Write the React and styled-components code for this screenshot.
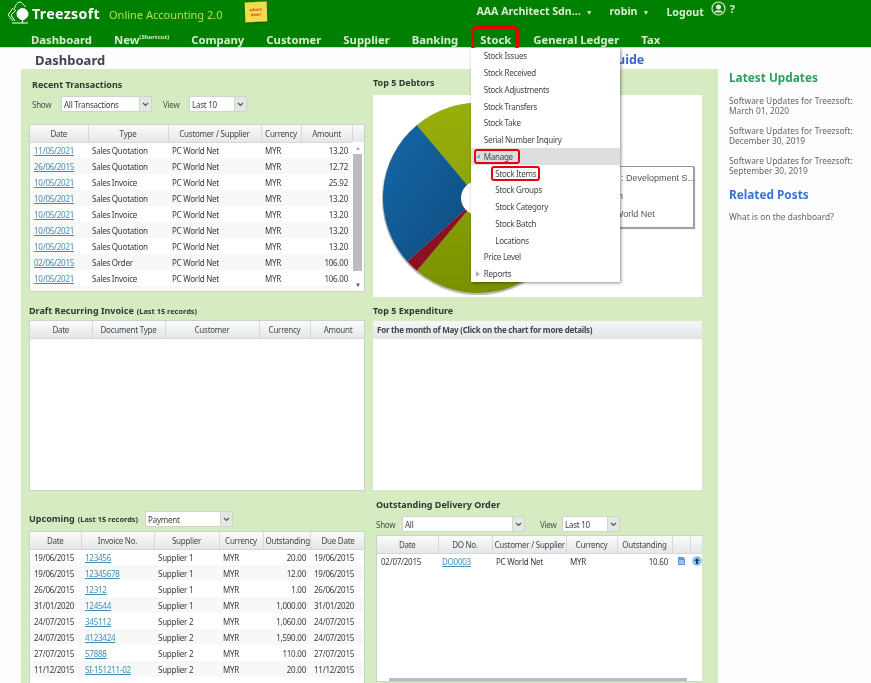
import React from "react";
import styled, { createGlobalStyle } from "styled-components";

const Global = createGlobalStyle`
  html, body { margin: 0; padding: 0; background: #fdfdfd; }
  body { font-family: "Noto Sans", "Liberation Sans", sans-serif; font-size: 8px; color: #333; }
  * { box-sizing: border-box; }
`;

const Page = styled.div`
  width: 871px; height: 683px; overflow: hidden; position: relative; background: #fdfdfd; filter: blur(.3px);
`;
const Header = styled.header`background: #008000; height: 48px; border-bottom: 1px solid #c9dcc9;`;
const TopBar = styled.div`display: flex; align-items: center; height: 26px; padding-left: 7px; position: relative;`;
const Brand = styled.span`
  font: bold 14.2px "Noto Sans", sans-serif; color: #fff; margin-left: 1px; letter-spacing: .35px; width: 77px; flex: none;
`;
const Product = styled.span`font: 11px "Noto Sans", sans-serif; color: #b5e04a; width: 136px; white-space: nowrap; flex: none; margin-top: 2px;`;
const Note = styled.div`
  width: 22px; height: 20px; background: #f5d94e; color: #c8401c; font: bold 4px/5px "Liberation Sans", sans-serif;
  text-align: center; padding-top: 5px; transform: rotate(-2deg); box-shadow: 0 1px 1px rgba(0,0,0,.3); margin-top: -2px;
`;
const UserMenu = styled.div`
  margin-left: auto; margin-right: 136px; display: flex; align-items: center; margin-top: -4px;
  font: bold 10.6px "Noto Sans", sans-serif; color: #d9ecd0; white-space: nowrap;
`;
const UserItem = styled.span`margin-right: ${p => p.$gap}px; margin-top: ${p => p.$top || 0}px;`;
const Caret = styled.span`font-size: 7px; margin-left: 5px; color: #c6dcc0;`;
const Help = styled.span`font-size: 11px; color: #d9ecd0; margin-left: 4px; margin-top: -6px;`;
const IconUp = styled.span`display: flex; margin-top: -6px;`;

const Nav = styled.nav`display: flex; gap: 22px; height: 22px; align-items: center; padding: 4px 0 0 31px;`;
const NavItem = styled.span`
  position: relative; font: bold 11.3px "Noto Sans", sans-serif; color: #d9ecd0; white-space: nowrap;
`;
const Sup = styled.sup`font-size: 6px; line-height: 0;`;
const StockBox = styled.div`
  position: absolute; left: -9px; top: -6px; width: 48px; height: 25px; border: 3px solid #e8000c; border-radius: 5px;
`;

const Menu = styled.div`
  position: absolute; left: -9px; top: 16px; width: 149px; background: #fff; z-index: 5;
  box-shadow: 1px 1px 3px rgba(0,0,0,.45); font: 8px "Noto Sans", sans-serif; letter-spacing: -.25px; color: #44444a;
`;
const MenuRow = styled.div`
  height: 16.75px; display: flex; align-items: center; position: relative; font-weight: 400;
  padding-left: ${p => (p.$sub ? 24 : 12.5)}px; background: ${p => (p.$active ? "#dedede" : "transparent")};
`;
const Flagged = styled.span`
  position: relative;
  &::after {
    content: ""; position: absolute; left: ${p => p.$left}px; right: ${p => p.$right}px; top: -2px; bottom: -2px;
    border: 2px solid #e8000c; border-radius: 3px;
  }
`;
const Tri = styled.span`
  position: absolute; left: 5px; width: 0; height: 0;
  ${p => p.$open
    ? "border-left: 4px solid transparent; border-bottom: 4px solid #58b0e0;"
    : "border-left: 4px solid #b4b4b4; border-top: 3px solid transparent; border-bottom: 3px solid transparent;"}
`;

const TitleRow = styled.div`display: flex; height: 21px; align-items: center; padding: 2px 0 0 35px;`;
const PageTitle = styled.h1`font: bold 13px "Noto Sans", sans-serif; color: #3f4250; margin: 0; width: 541px; flex: none;`;
const GuideLink = styled.span`font: bold 12.5px "Noto Sans", sans-serif; color: #3c66c8;`;

const Body = styled.div`display: flex; padding-left: 21px;`;
const Panel = styled.main`
  width: 697px; height: 640px; background: #d7ebc3; display: grid; grid-template-columns: 336px 329px; column-gap: 8px;
  padding-left: 8px; flex: none;
`;
const Col = styled.div`display: flex; flex-direction: column;`;
const SectionTitle = styled.h2`
  font: bold 9px "Noto Sans", sans-serif; color: #2f3a2f; white-space: nowrap;
  display: flex; align-items: baseline; height: 12px; line-height: 12px; flex: none;
  margin: ${p => p.$m || "0"};
`;
const Small = styled.small`font-size: 7.4px; margin-left: 3px;`;

const Controls = styled.div`
  display: flex; align-items: center; height: 16px; margin: ${p => p.$m || "0"}; padding-left: ${p => p.$pl || 0}px; flex: none;
`;
const Label = styled.span`width: ${p => p.$w}px; color: #4a4f4a; font-size: 8px; letter-spacing: -.25px; flex: none;`;
const SelectBox = styled.div`
  width: ${p => p.$w}px; height: 16px; background: #fff; border: 1px solid #cdd6cb; display: flex; align-items: center;
  padding-left: 2px; color: #404040; font-size: 8px; letter-spacing: -.25px; position: relative; margin: 0 ${p => p.$mr || 0}px 0 ${p => p.$ml || 0}px; flex: none;
`;
const Arrow = styled.span`
  position: absolute; right: 0; top: 0; bottom: 0; width: 12px; background: #e4e8e2; display: flex; align-items: center; justify-content: center;
  border-left: 1px solid #d0d6ce;
`;
const Frame = styled.div`
  position: relative; height: ${p => p.$h}px; margin: ${p => p.$m || "0"}; background: #fff; border: 1px solid #c9d2c8; overflow: hidden; flex: none;
`;
const Table = styled.table`
  border-collapse: collapse; table-layout: fixed; width: 100%; font-size: 8px; letter-spacing: -.25px;
`;
const Th = styled.th`
  height: 17px; padding: 0 2px; font-weight: 400; color: #44484f; text-align: center; white-space: nowrap; overflow: hidden;
  background: linear-gradient(#fbfbfb, #e4e6e8); border-right: 1px solid #d6d8da; border-bottom: 1px solid #d6d8da;
`;
const Td = styled.td`
  height: 16px; padding: 0 4px; white-space: nowrap; overflow: hidden; color: #3a3a3a;
  text-align: ${p => p.$right ? "right" : "left"};
`;
const IconCell = styled(Td)`padding: 0 0 0 1px; text-align: center; line-height: 0;`;
const Tr = styled.tr`background: ${p => (p.$odd ? "#f8f8f8" : "#fff")};`;
const LinkText = styled.span`color: #3e8fb5; text-decoration: underline;`;

const VScroll = styled.div`
  position: absolute; right: 0; top: 17px; bottom: 0; width: 13px; background: #fff; color: #777; font-size: 6px;
  &::before { content: ""; position: absolute; left: 2px; right: 2px; top: 12px; height: 117px; background: #bcbcbc; }
`;
const ScrollUp = styled.span`position: absolute; left: 4px; top: 2px; color: #aaa;`;
const ScrollDown = styled.span`position: absolute; left: 4px; bottom: 2px; color: #555;`;
const HScroll = styled.div`position: absolute; left: 12px; right: 15px; bottom: 0; height: 3px; background: #bcbcbc;`;
const OutFrame = styled(Frame)`margin-left: 3px; border-right: 0;`;

const ChartGap = styled.div`height: 6px; flex: none;`;
const ChartBox = styled.div`position: relative; height: 202px; background: #fff; flex: none;`;
const PieSlot = styled.div`padding: 0 0 0 5px;`;
const Legend = styled.div`
  position: absolute; left: 170px; top: 71px; width: 151px; height: 62px; background: #fff; border: 1px solid #999;
  box-shadow: 1px 1px 1px #aaa; padding: 2px 0 0 56px; font: 9px/18px "Liberation Sans", sans-serif; color: #555; white-space: nowrap;
`;
const ExpenseBox = styled.div`height: 169px; background: #fff; flex: none;`;
const ExpenseHead = styled.div`
  height: 18px; background: linear-gradient(#f7f7f7, #e2e4e6); font-weight: 700; font-size: 8px; letter-spacing: -.25px; line-height: 18px; padding-left: 4px; color: #444;
`;

const Side = styled.aside`padding: 0 0 0 11px; width: 140px; flex: none; font-size: 8.4px; color: #666;`;
const SideHead = styled.h3`
  font: bold 11.8px "Noto Sans", sans-serif; color: ${p => p.$c}; margin: ${p => p.$m}; white-space: nowrap;
`;
const SideItem = styled.p`margin: 0 0 10px; line-height: 10px; white-space: nowrap;`;

const Chevron = () => (
  <svg width="7" height="5" viewBox="0 0 7 5"><path d="M1 1l2.5 2.5L6 1" fill="none" stroke="#555" strokeWidth="1.2" /></svg>
);
const Select = ({ w, mr, ml, children }) => (
  <SelectBox $w={w} $mr={mr} $ml={ml}>{children}<Arrow><Chevron /></Arrow></SelectBox>
);

const Logo = () => (
  <svg width="24" height="24" viewBox="0 0 24 24" fill="none" stroke="#fff" strokeWidth="1">
    <path d="M7 9C8 5 10 1 13 1c2 0 3 3 6 5" />
    <path d="M6 7L1 14l5 6" />
    <path d="M9 9l-5 5 4 6" />
    <circle cx="15.5" cy="13" r="5.5" fill="#fff" />
    <path d="M15.5 14v8M5 22h16" strokeWidth="1.2" />
  </svg>
);
const UserIcon = () => (
  <svg width="15" height="15" viewBox="0 0 15 15">
    <circle cx="7.5" cy="7.5" r="6.5" fill="none" stroke="#d9ecd0" strokeWidth="1.2" />
    <circle cx="7.5" cy="6" r="2.5" fill="#d9ecd0" />
    <path d="M3 11.5c1-3 8-3 9 0" fill="#d9ecd0" />
  </svg>
);
const DocIcon = () => (
  <svg width="9" height="10" viewBox="0 0 9 10">
    <path d="M1 1h5l2 2v6H1z" fill="#5b9bdc" />
    <path d="M2 5h5M2 7h5" stroke="#fff" strokeWidth=".8" />
  </svg>
);
const UpIcon = () => (
  <svg width="10" height="10" viewBox="0 0 10 10">
    <circle cx="5" cy="5" r="4.8" fill="#8fbfe8" />
    <path d="M5 2L2.5 5H4v3h2V5h1.5z" fill="#123f78" />
  </svg>
);

const Pie = () => {
  const cx = 100, cy = 103, r = 95;
  const pt = a => { const t = (a - 90) * Math.PI / 180; return `${(cx + r * Math.cos(t)).toFixed(1)} ${(cy + r * Math.sin(t)).toFixed(1)}`; };
  const slice = (a, b) => `M${cx} ${cy}L${pt(a)}A${r} ${r} 0 ${b - a > 180 ? 1 : 0} 1 ${pt(b)}Z`;
  return (
    <svg width="210" height="202" viewBox="0 0 210 202" style={{ display: "block" }}>
      <defs>
        <linearGradient id="oliveA" x1="0" y1="0" x2="0" y2="1"><stop offset="0" stopColor="#98ae0a" /><stop offset="1" stopColor="#87a004" /></linearGradient>
        <linearGradient id="oliveB" x1="0" y1="0" x2="0" y2="1"><stop offset="0" stopColor="#87a004" /><stop offset="1" stopColor="#7b9000" /></linearGradient>
        <linearGradient id="blueA" x1="0" y1="0" x2="1" y2="1"><stop offset="0" stopColor="#1568a8" /><stop offset="1" stopColor="#0d4a7c" /></linearGradient>
      </defs>
      <circle cx={cx} cy={cy + 1} r={r + 1} fill="#777" opacity=".5" />
      <path d={slice(-40, 120)} fill="url(#oliveA)" />
      <path d={slice(120, 220)} fill="url(#oliveB)" />
      <path d={slice(220, 228)} fill="#8c1022" />
      <path d={slice(228, 320)} fill="url(#blueA)" />
      <circle cx={cx} cy={cy} r="17" fill="#fff" />
    </svg>
  );
};

const recent = [
  ["11/05/2021", "Sales Quotation", "13.20"], ["26/06/2015", "Sales Quotation", "12.72"], ["10/05/2021", "Sales Invoice", "25.92"],
  ["10/05/2021", "Sales Quotation", "13.20"], ["10/05/2021", "Sales Invoice", "13.20"], ["10/05/2021", "Sales Quotation", "13.20"],
  ["10/05/2021", "Sales Quotation", "13.20"], ["02/06/2015", "Sales Order", "106.00"], ["10/05/2021", "Sales Invoice", "106.00"],
  ["10/05/2021", "Sales Invoice", "106.00"],
];
const upcoming = [
  ["19/06/2015", "123456", "Supplier 1", "20.00"], ["19/06/2015", "12345678", "Supplier 1", "12.00"],
  ["26/06/2015", "12312", "Supplier 1", "1.00"], ["31/01/2020", "124544", "Supplier 1", "1,000.00"],
  ["24/07/2015", "345112", "Supplier 2", "1,060.00"], ["24/07/2015", "4123424", "Supplier 2", "1,590.00"],
  ["27/07/2015", "57888", "Supplier 2", "110.00"], ["11/12/2015", "SI-151211-02", "Supplier 2", "20.00"],
];
const Cols = ({ w }) => <colgroup>{w.map((x, i) => <col key={i} style={{ width: x }} />)}</colgroup>;
const Head = ({ cells }) => <thead><tr>{cells.map((c, i) => <Th key={i}>{c}</Th>)}</tr></thead>;

const menuTop = ["Stock Issues", "Stock Received", "Stock Adjustments", "Stock Transfers", "Stock Take", "Serial Number Inquiry"];
const menuSub = ["Stock Groups", "Stock Category", "Stock Batch", "Locations"];

export default function App() {
  return (
    <Page>
      <Global />
      <Header>
        <TopBar>
          <Logo />
          <Brand>Treezsoft</Brand>
          <Product>Online Accounting 2.0</Product>
          <Note>what's<br />New?</Note>
          <UserMenu>
            <UserItem $gap={17}>AAA Architect Sdn...<Caret>▼</Caret></UserItem>
            <UserItem $gap={17}>robin<Caret>▼</Caret></UserItem>
            <UserItem $gap={7} $top={1}>Logout</UserItem>
            <IconUp><UserIcon /></IconUp>
            <Help>?</Help>
          </UserMenu>
        </TopBar>
        <Nav>
          <NavItem>Dashboard</NavItem>
          <NavItem>New<Sup>(Shortcut)</Sup></NavItem>
          <NavItem>Company</NavItem>
          <NavItem>Customer</NavItem>
          <NavItem>Supplier</NavItem>
          <NavItem>Banking</NavItem>
          <NavItem>
            Stock
            <StockBox />
            <Menu>
              {menuTop.map(m => <MenuRow key={m}>{m}</MenuRow>)}
              <MenuRow $active><Tri $open /><Flagged $left={-10} $right={-7}>Manage</Flagged></MenuRow>
              <MenuRow $sub><Flagged $left={-4} $right={-4}>Stock Items</Flagged></MenuRow>
              {menuSub.map(m => <MenuRow $sub key={m}>{m}</MenuRow>)}
              <MenuRow>Price Level</MenuRow>
              <MenuRow><Tri />Reports</MenuRow>
            </Menu>
          </NavItem>
          <NavItem>General Ledger</NavItem>
          <NavItem>Tax</NavItem>
        </Nav>
      </Header>
      <TitleRow>
        <PageTitle>Dashboard</PageTitle>
        <GuideLink>User Guide</GuideLink>
      </TitleRow>
      <Body>
        <Panel>
          <Col>
            <SectionTitle $m="10px 0 5px 3px">Recent Transactions</SectionTitle>
            <Controls $pl={3} $m="0 0 12px">
              <Label $w={29}>Show</Label>
              <Select w={91} mr={11}>All Transactions</Select>
              <Label $w={26}>View</Label>
              <Select w={58}>Last 10</Select>
            </Controls>
            <Frame $h={168}>
              <Table>
                <Cols w={[58, 80, 93, 40, 51, 14]} />
                <Head cells={["Date", "Type", "Customer / Supplier", "Currency", "Amount", ""]} />
                <tbody>
                  {recent.map((r, i) => (
                    <Tr key={i} $odd={i % 2 === 1}>
                      <Td><LinkText>{r[0]}</LinkText></Td><Td>{r[1]}</Td><Td>PC World Net</Td><Td>MYR</Td><Td $right>{r[2]}</Td><Td />
                    </Tr>
                  ))}
                </tbody>
              </Table>
              <VScroll><ScrollUp>▲</ScrollUp><ScrollDown>▼</ScrollDown></VScroll>
            </Frame>
            <SectionTitle $m="13px 0 3px">Draft Recurring Invoice<Small>(Last 15 records)</Small></SectionTitle>
            <Frame $h={171}>
              <Table>
                <Cols w={[62, 73, 94, 51, 56]} />
                <Head cells={["Date", "Document Type", "Customer", "Currency", "Amount"]} />
              </Table>
            </Frame>
            <Controls $m="20px 0 4px">
              <SectionTitle>Upcoming<Small>(Last 15 records)</Small></SectionTitle>
              <Select w={88} ml={7}>Payment</Select>
            </Controls>
            <Frame $h={160}>
              <Table>
                <Cols w={[51, 73, 65, 44, 47, 56]} />
                <Head cells={["Date", "Invoice No.", "Supplier", "Currency", "Outstanding", "Due Date"]} />
                <tbody>
                  {upcoming.map((r, i) => (
                    <Tr key={i} $odd={i % 2 === 1}>
                      <Td>{r[0]}</Td><Td><LinkText>{r[1]}</LinkText></Td><Td>{r[2]}</Td><Td>MYR</Td><Td $right>{r[3]}</Td><Td>{r[0]}</Td>
                    </Tr>
                  ))}
                </tbody>
              </Table>
            </Frame>
          </Col>
          <Col>
            <SectionTitle $m="8px 0 0">Top 5 Debtors</SectionTitle>
            <ChartGap />
            <ChartBox>
              <PieSlot><Pie /></PieSlot>
              <Legend>
                <div>ABC : Development S...</div>
                <div>Batch</div>
                <div>PC World Net</div>
              </Legend>
            </ChartBox>
            <SectionTitle $m="8px 0 4px">Top 5 Expenditure</SectionTitle>
            <ExpenseBox>
              <ExpenseHead>For the month of May (Click on the chart for more details)</ExpenseHead>
            </ExpenseBox>
            <SectionTitle $m="9px 0 5px 3px">Outstanding Delivery Order</SectionTitle>
            <Controls $pl={3} $m="0 0 3px">
              <Label $w={26}>Show</Label>
              <Select w={123} mr={15}>All</Select>
              <Label $w={22}>View</Label>
              <Select w={58}>Last 10</Select>
            </Controls>
            <OutFrame $h={147}>
              <Table>
                <Cols w={[61, 54, 74, 51, 55, 18, 12]} />
                <Head cells={["Date", "DO No.", "Customer / Supplier", "Currency", "Outstanding", "", ""]} />
                <tbody>
                  <Tr>
                    <Td>02/07/2015</Td><Td><LinkText>DO0003</LinkText></Td><Td>PC World Net</Td><Td>MYR</Td><Td $right>10.60</Td>
                    <IconCell><DocIcon /></IconCell><IconCell><UpIcon /></IconCell>
                  </Tr>
                </tbody>
              </Table>
              <HScroll />
            </OutFrame>
          </Col>
        </Panel>
        <Side>
          <SideHead $c="#2e9d62" $m="0 0 11px">Latest Updates</SideHead>
          <SideItem>Software Updates for Treezsoft:<br />March 01, 2020</SideItem>
          <SideItem>Software Updates for Treezsoft:<br />December 30, 2019</SideItem>
          <SideItem>Software Updates for Treezsoft:<br />September 30, 2019</SideItem>
          <SideHead $c="#3c74d8" $m="9px 0 10px">Related Posts</SideHead>
          <SideItem>What is on the dashboard?</SideItem>
        </Side>
      </Body>
    </Page>
  );
}
